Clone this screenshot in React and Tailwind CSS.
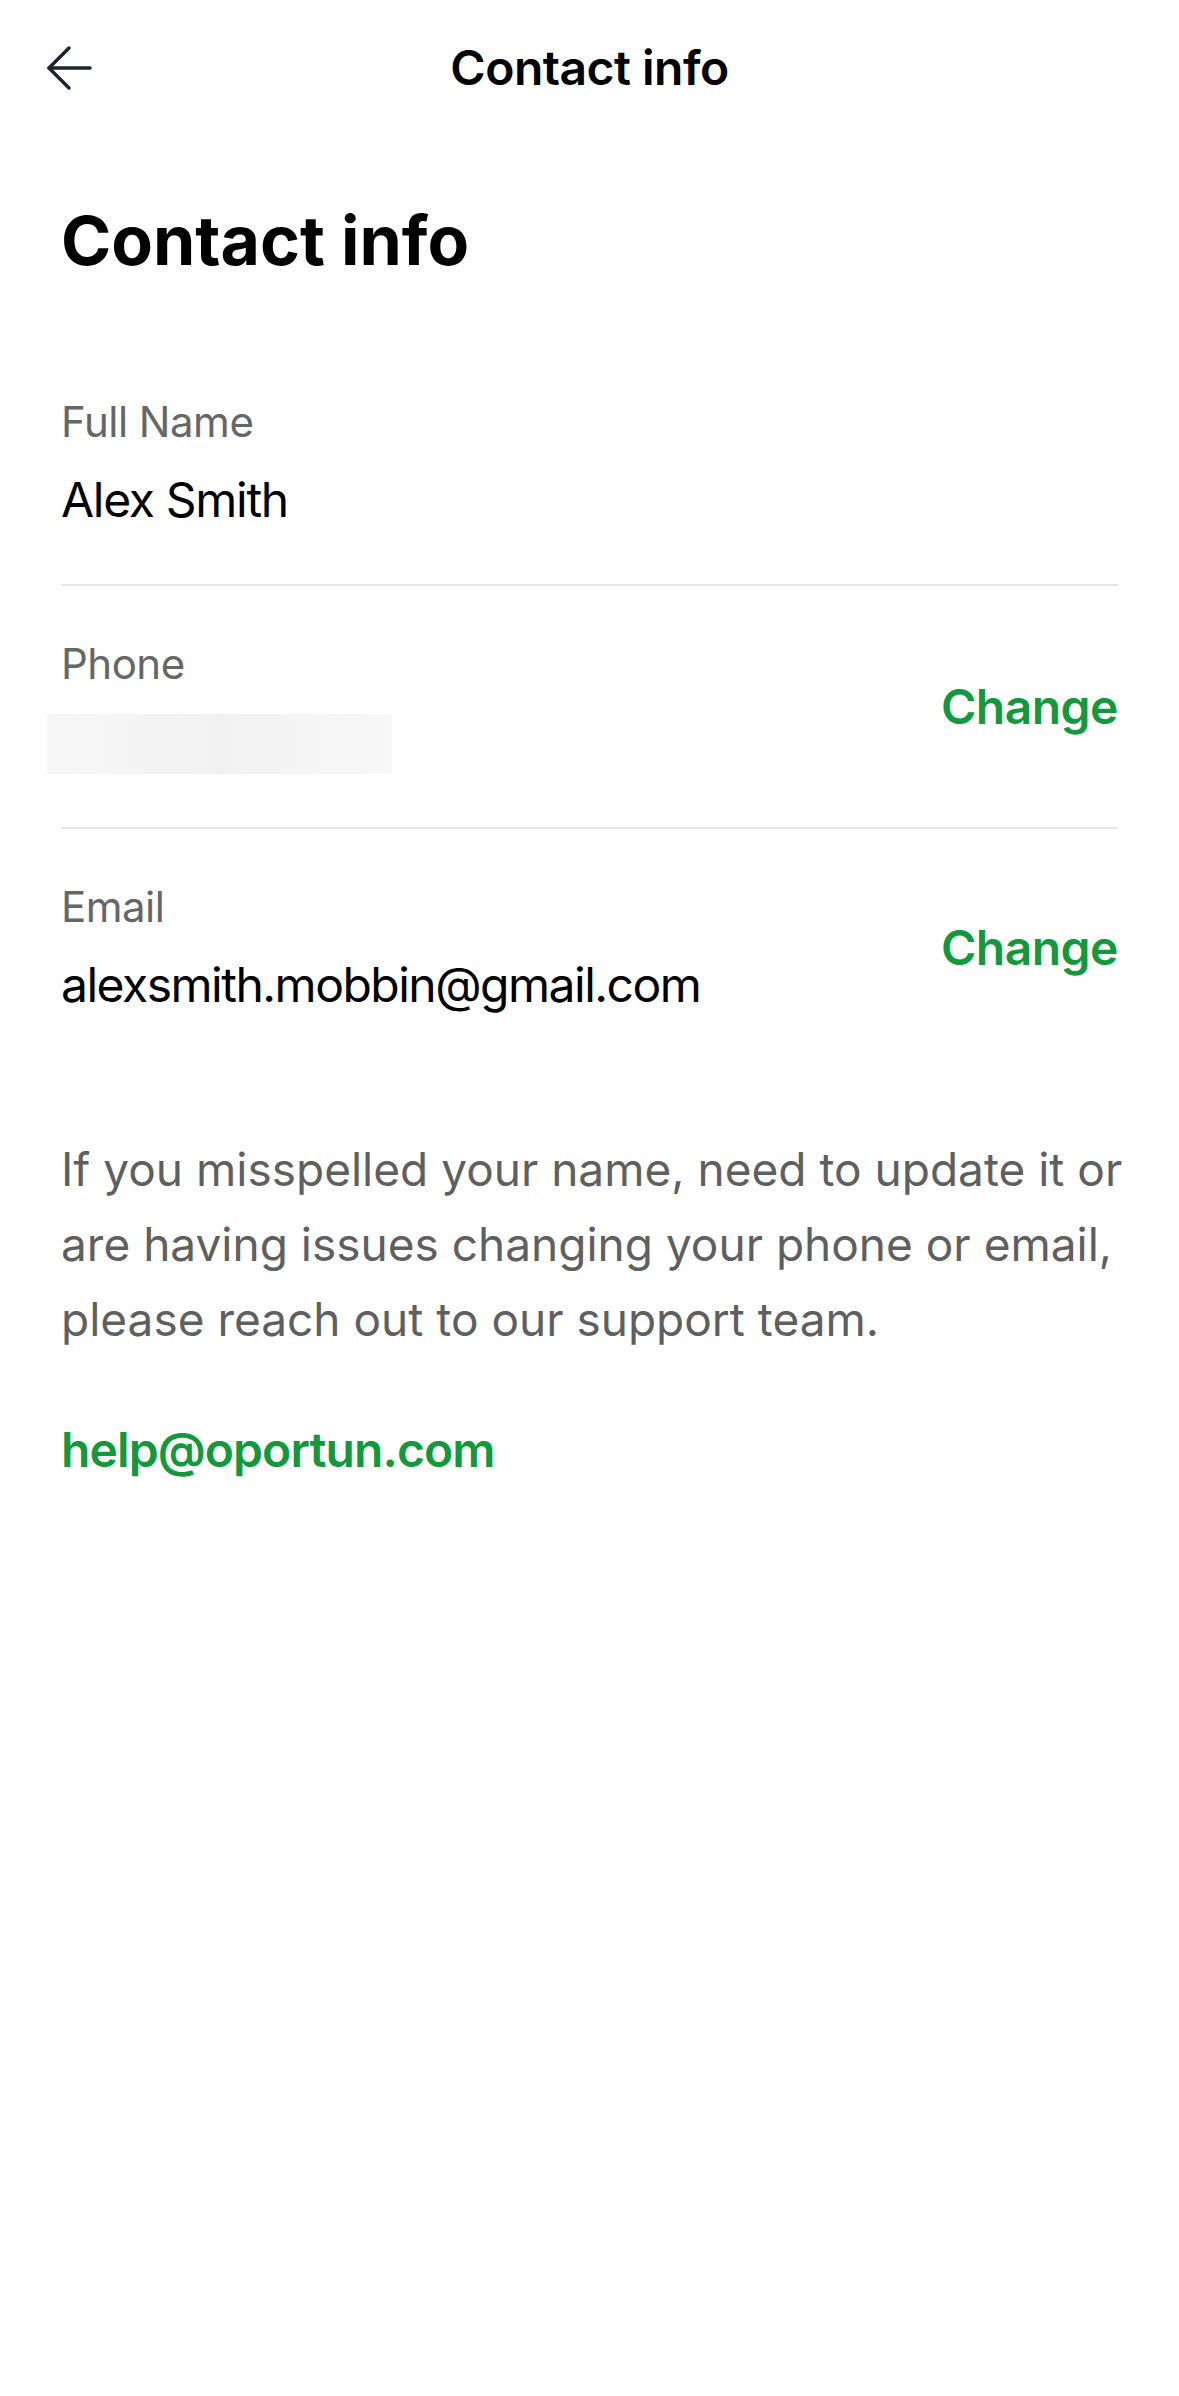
import React from "react";

function BackArrow() {
  return (
    <svg width="46" height="46" viewBox="0 0 46 46" fill="none" stroke="#1d2530" strokeWidth="3.5" strokeLinecap="round" strokeLinejoin="round">
      <path d="M3 23 H44" />
      <path d="M23 3 L3 23 L23 43" />
    </svg>
  );
}

function Row({ label, children, action, className }) {
  return (
    <div className={"flex items-center justify-between " + className}>
      <div className="flex flex-col">
        <div className="text-[42px] leading-[48px] text-[#666666] tracking-[-0.5px]">{label}</div>
        <div className="mt-[26px]">{children}</div>
      </div>
      {action ? (
        <button className="text-[48px] leading-[56px] font-semibold text-[#12993b] tracking-[-0.5px]">{action}</button>
      ) : null}
    </div>
  );
}

export default function App() {
  return (
    <div className="min-h-[2396px] bg-white text-black font-['Inter','Noto_Sans',sans-serif]">
      <header className="grid grid-cols-[1fr_auto_1fr] items-center h-[136px]">
        <div className="pl-[46px] flex items-center">
          <BackArrow />
        </div>
        <div className="text-[48px] leading-[56px] font-semibold tracking-[-0.5px]">Contact info</div>
        <div />
      </header>
      <main className="px-[61px]">
        <h1 className="mt-[64px] text-[68px] leading-[80px] font-bold tracking-[0px]">Contact info</h1>
        <div className="mt-[64px]">
          <Row label="Full Name" className="pt-[54px] pb-[56px] border-b-2 border-[#e6e6e6]">
            <div className="text-[48px] leading-[56px] tracking-[-1.3px]">Alex Smith</div>
          </Row>
          <Row label="Phone" action="Change" className="pt-[54px] pb-[53px] border-b-2 border-[#e6e6e6]">
            <div className="-ml-[14px] w-[345px] h-[60px] bg-linear-to-r from-[#f7f7f7] via-[#f2f2f2] to-[#f8f8f8]" />
          </Row>
          <Row label="Email" action="Change" className="pt-[54px]">
            <div className="text-[48px] leading-[56px] tracking-[-1.5px]">alexsmith.mobbin@gmail.com</div>
          </Row>
        </div>
        <p className="mt-[119px] -mr-[40px] text-[46px] leading-[75px] text-[#5f5f5f] tracking-[0px]">
          If you misspelled your name, need to update it or
          <br />
          are having issues changing your phone or email,
          <br />
          please reach out to our support team.
        </p>
        <div className="mt-[65px] text-[48px] leading-[56px] font-semibold text-[#12993b] tracking-[-0.9px]">help@oportun.com</div>
      </main>
    </div>
  );
}
